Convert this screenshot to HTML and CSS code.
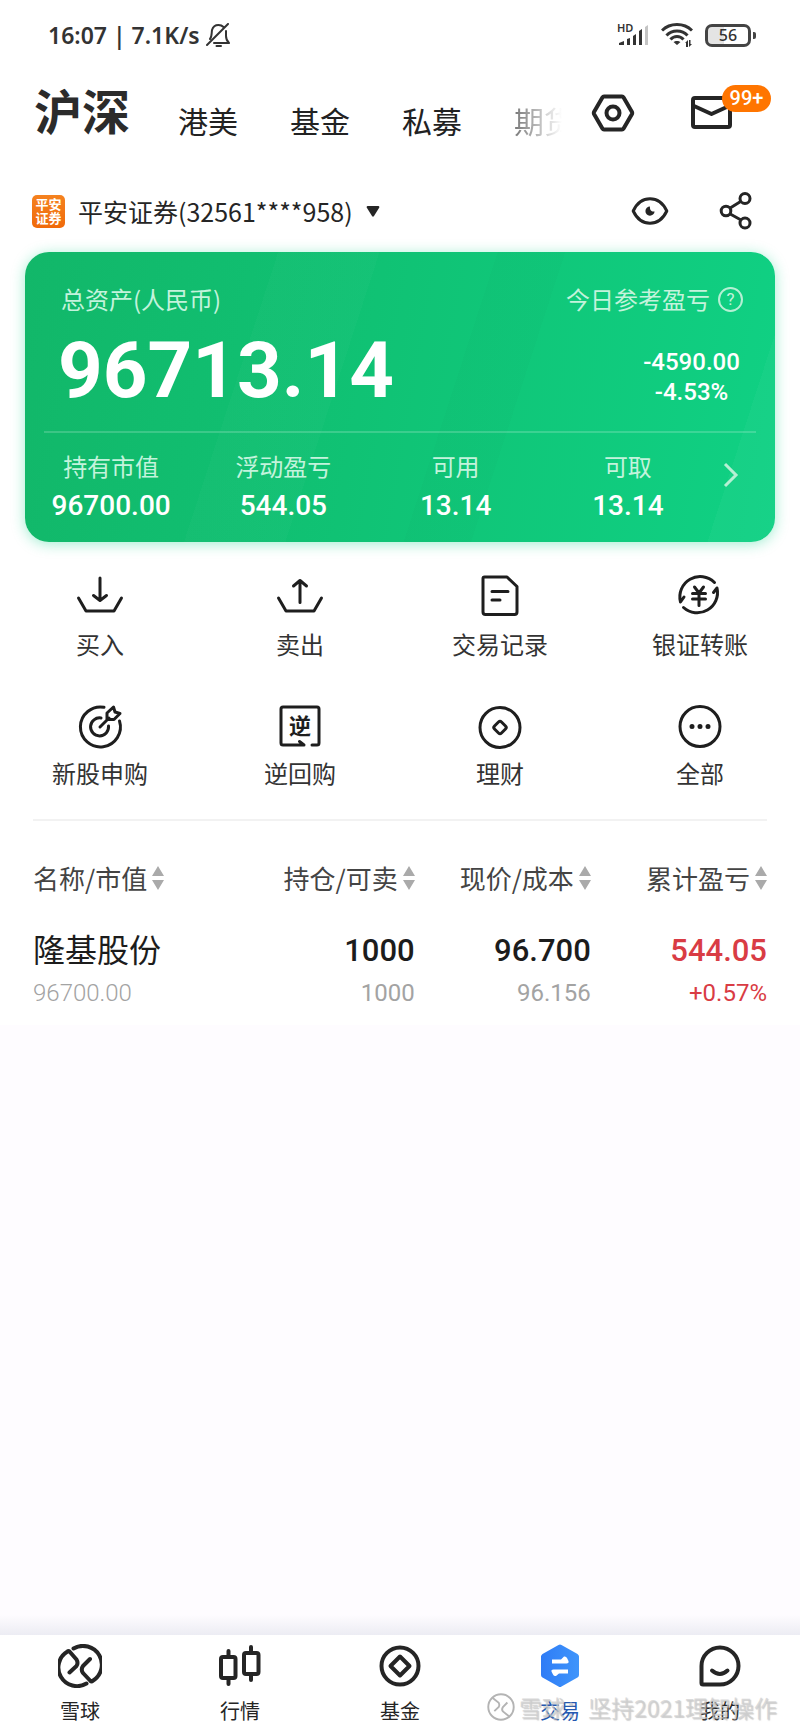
FILE: index.html
```html
<!DOCTYPE html>
<html lang="zh-CN">
<head>
<meta charset="utf-8">
<meta name="viewport" content="width=device-width, initial-scale=1">
<title>交易</title>
<link rel="stylesheet" href="styles.css">
</head>
<body>
<div class="app">
  <div class="status">
    <div class="status-left">
      <span>16:07 | 7.1K/s</span>
      <svg width="24" height="24" viewBox="0 0 24 24" fill="none" stroke="#333" stroke-width="2" stroke-linecap="round" stroke-linejoin="round"><path d="M4 16C6 14 5.500 10 6 7C7 3.500 9.500 2 12.500 2C14.500 2 16 2.500 17.500 4M20 8V13C20 16 21 18 23 20H8M1 22L22 1M10.500 23H15"/></svg>
    </div>
    <div class="status-right">
      <svg width="32" height="28" viewBox="0 0 32 28" fill="#333"><path d="M2 24V22L7 20V24ZM10 24V18L13 17V24ZM16 24V15L19 13V24ZM22 24V10L25 8V24Z"/><path fill="#c4c4c4" d="M28 24V6L31 4V24Z"/><text class="hd" x="0" y="11">HD</text></svg>
      <svg width="32" height="26" viewBox="0 0 32 26" fill="none" stroke="#333" stroke-width="3"><path d="M1 8.500C9 .500 23 .500 31 8.500M5.500 13.500C11 7.500 21 7.500 26.500 13.500M9.500 17.500C13 13.500 19 13.500 22.500 17.500"/><path fill="#333" stroke="none" d="M16 23L12.500 20C14 18.500 18 18.500 19.500 20ZM24 21L27 18V25H25V21ZM28 18H29.500V22H31L28 25Z"/></svg>
      <span class="battery">56</span>
    </div>
  </div>

  <header class="topbar">
    <nav class="tabs">
      <a class="tab tab-active" href="#">沪深</a>
      <a class="tab" href="#">港美</a>
      <a class="tab" href="#">基金</a>
      <a class="tab" href="#">私募</a>
      <a class="tab tab-fade" href="#">期货</a>
    </nav>
    <button class="icon-btn" aria-label="设置"><svg width="44" height="40" viewBox="0 0 44 40" fill="none" stroke="#252525" stroke-width="4" stroke-linejoin="round"><path d="M13 3.500H31Q32 3.500 32.600 4.500L41 19Q41.500 20 41 21L32.600 35.500Q32 36.500 31 36.500H13Q12 36.500 11.400 35.500L3 21Q2.500 20 3 19L11.400 4.500Q12 3.500 13 3.500Z"/><circle cx="22" cy="20" r="6.500"/></svg></button>
    <button class="icon-btn mail" aria-label="消息"><svg width="42" height="34" viewBox="0 0 42 34" fill="none" stroke="#252525" stroke-width="4" stroke-linejoin="round"><rect x="2" y="2" width="37" height="29" rx="2"/><path d="M3 10L20.500 18L38 10"/></svg><span class="badge">99+</span></button>
  </header>

  <div class="account">
    <button class="account-pick">
      <span class="broker"><span>平安</span><span>证券</span></span>
      <span>平安证券(32561****958)</span>
      <svg width="14" height="11" viewBox="0 0 14 11"><path fill="#252525" d="M1.500 0H12.500Q14 .500 13 2L8 10Q7 11.500 6 10L1 2Q0 .500 1.500 0Z"/></svg>
    </button>
    <button class="icon-btn" aria-label="隐藏金额"><svg width="38" height="28" viewBox="0 0 38 28" fill="none" stroke="#252525" stroke-width="3" stroke-linejoin="round"><path d="M2.200 14C6 6 12 1.800 19 1.800S32 6 35.800 14C32 22 26 26.200 19 26.200S6 22 2.200 14Z"/><path fill="#252525" stroke="none" d="M19 9.500A4.600 4.600 0 1 0 23.600 14.500C20.500 15 18.500 13 19 9.500Z"/></svg></button>
    <button class="icon-btn" aria-label="分享"><svg width="34" height="40" viewBox="0 0 34 40" fill="none" stroke="#252525" stroke-width="3"><circle cx="7" cy="20" r="4.800"/><circle cx="26" cy="7.500" r="5"/><circle cx="26" cy="32" r="5"/><path d="M10.800 17.200L22 10.300M10.800 22.800L22 29"/></svg></button>
  </div>

  <section class="card">
    <div class="card-top">
      <div class="total">
        <div class="label">总资产(人民币)</div>
        <div class="amount">96713.14</div>
      </div>
      <div class="today">
        <div class="label today-label">今日参考盈亏<button class="help" aria-label="说明">?</button></div>
        <div class="today-values"><div>-4590.00</div><div>-4.53%</div></div>
      </div>
    </div>
    <div class="card-bottom">
      <div class="stat"><span class="label">持有市值</span><b>96700.00</b></div>
      <div class="stat"><span class="label">浮动盈亏</span><b>544.05</b></div>
      <div class="stat"><span class="label">可用</span><b>13.14</b></div>
      <div class="stat"><span class="label">可取</span><b>13.14</b></div>
      <svg class="chevron" width="16" height="26" viewBox="0 0 16 26" fill="none" stroke="#b5f0d4" stroke-width="3"><path d="M2 2L13 13L2 24"/></svg>
    </div>
  </section>

  <nav class="actions">
    <a class="action" href="#"><svg width="48" height="48" viewBox="0 0 48 48"><path d="M2.500 24L10 37H38L45.500 24M24 4V26M17.500 21.500L24 26.500L30.500 21.500"/></svg>买入</a>
    <a class="action" href="#"><svg width="48" height="48" viewBox="0 0 48 48"><path d="M2.500 24L10 37H38L45.500 24M24 28.500V6.500M17.500 12L24 6.500L30.500 12"/></svg>卖出</a>
    <a class="action" href="#"><svg width="48" height="48" viewBox="0 0 48 48"><path d="M8.500 3H31L41 12.500V38Q41 40.500 38.500 40.500H9.500Q7 40.500 7 38V4.500Q7 3 8.500 3ZM16 17.500H32M16 26H24"/></svg>交易记录</a>
    <a class="action" href="#"><svg width="48" height="48" viewBox="0 0 48 48"><path d="M38.500 8.500A20.300 20.300 0 0 0 4.500 28L8 23M7.500 33.500A20.300 20.300 0 0 0 41 14L37.500 18.500M18.500 13L23 19L27.500 13M16.500 19.500H29.500M16.500 25H29.500M23 19V31.500"/></svg>银证转账</a>
    <a class="action" href="#"><svg width="48" height="48" viewBox="0 0 48 48"><path d="M28 4.300A20 20 0 1 0 43.500 18M25 15A9 9 0 1 0 32.500 23M24 24L33 15M31 16.500V10L37.500 4L39 9L44 10.500L38 16.500Z"/></svg>新股申购</a>
    <a class="action" href="#"><svg width="48" height="48" viewBox="0 0 48 48"><path d="M28 42H7Q5 42 5 40V6Q5 4 7 4H41Q43 4 43 6V40Q43 42 41 42H36M28 42L23.500 38.500"/><text class="ni" x="24" y="31">逆</text></svg>逆回购</a>
    <a class="action" href="#"><svg width="48" height="48" viewBox="0 0 48 48"><circle cx="24" cy="24.500" r="20"/><path d="M22.500 19Q24 17.500 25.500 19L29.500 23Q31 24.500 29.500 26L25.500 30Q24 31.500 22.500 30L18.500 26Q17 24.500 18.500 23Z"/></svg>理财</a>
    <a class="action" href="#"><svg width="48" height="48" viewBox="0 0 48 48"><circle cx="24" cy="23.500" r="20"/><path class="dots" d="M16 23.500H16.010M24 23.500H24.010M32 23.500H32.010"/></svg>全部</a>
  </nav>

  <table class="holdings">
    <thead>
      <tr>
        <th><button class="sort">名称/市值<svg width="12" height="24" viewBox="0 0 12 24"><path d="M6 0L12 10H0ZM6 24L0 14H12Z"/></svg></button></th>
        <th><button class="sort">持仓/可卖<svg width="12" height="24" viewBox="0 0 12 24"><path d="M6 0L12 10H0ZM6 24L0 14H12Z"/></svg></button></th>
        <th><button class="sort">现价/成本<svg width="12" height="24" viewBox="0 0 12 24"><path d="M6 0L12 10H0ZM6 24L0 14H12Z"/></svg></button></th>
        <th><button class="sort">累计盈亏<svg width="12" height="24" viewBox="0 0 12 24"><path d="M6 0L12 10H0ZM6 24L0 14H12Z"/></svg></button></th>
      </tr>
    </thead>
    <tbody>
      <tr>
        <td><div class="main">隆基股份</div><div class="sub">96700.00</div></td>
        <td><div class="main">1000</div><div class="sub">1000</div></td>
        <td><div class="main">96.700</div><div class="sub">96.156</div></td>
        <td class="gain"><div class="main">544.05</div><div class="sub">+0.57%</div></td>
      </tr>
    </tbody>
  </table>

  <div class="blank"></div>

  <nav class="bottom">
    <a class="nav-item" href="#"><svg width="44" height="44" viewBox="0 0 44 44"><path d="M15.500 4.500A18.500 18.500 0 0 1 34.500 37Q33.500 38 32.500 37L25 29Q22.500 25.500 25 22L32 15M28.500 39.500A18.500 18.500 0 0 1 9.500 7.500Q10.500 6.500 11.500 7.500L18.500 15.500Q20.500 19 18.500 22L11.500 28.500"/></svg>雪球</a>
    <a class="nav-item" href="#"><svg width="44" height="44" viewBox="0 0 44 44"><rect x="3" y="13" width="14.500" height="21" rx="2"/><rect x="26" y="9" width="14.500" height="21" rx="2"/><path d="M10.500 7V13M10.500 34V40M33 3V9M33 30V36"/></svg>行情</a>
    <a class="nav-item" href="#"><svg width="44" height="44" viewBox="0 0 44 44"><circle cx="22" cy="22" r="18.500"/><path d="M22 12.500L31.500 22L22 31.500L12.500 22Z"/></svg>基金</a>
    <a class="nav-item nav-current" href="#"><svg width="44" height="44" viewBox="0 0 44 44"><defs><linearGradient id="hex" x2="1" y2="0"><stop stop-color="#2f7cf6"/><stop offset="1" stop-color="#3f95fb"/></linearGradient></defs><path class="hex" d="M20.500 1Q22 0 23.500 1L39.500 10Q41 11 41 12.500V31Q41 32.500 39.500 33.500L23.500 42.500Q22 43.500 20.500 42.500L4.500 33.500Q3 32.500 3 31V12.500Q3 11 4.500 10Z"/><path class="swap" d="M14 15.500H23L26 12.500Q28 12 29 14L30.500 17Q31 19.500 28.500 19.500H14ZM30 29.500H21L18 32Q16 32.500 15 30.500L13.500 27.500Q13 25.500 15.500 25.500H30Z"/></svg>交易</a>
    <a class="nav-item" href="#"><svg width="44" height="44" viewBox="0 0 44 44"><path d="M3.500 22A18.500 18.500 0 1 1 22 40.500H5Q3.500 40.500 3.500 39ZM14 26.500Q22 33.500 29.500 26.500"/></svg>我的</a>
    <div class="mark"><svg width="28" height="28" viewBox="0 0 44 44"><circle cx="22" cy="22" r="20"/><path d="M9 8L18.500 15.500Q20.500 19 18.500 22L11.500 28.500M35 37L25 29Q22.500 25.500 25 22L32 15"/></svg><span>雪球：坚持2021理智操作</span></div>
  </nav>
</div>
</body>
</html>
```

FILE: styles.css
```css
* { box-sizing: border-box; }
body {
  margin: 0;
  background: #fff;
  color: #252525;
  font-family: "Noto Sans CJK SC", sans-serif;
}
a { color: inherit; text-decoration: none; }
button {
  margin: 0;
  padding: 0;
  border: 0;
  background: none;
  color: inherit;
  font: inherit;
}
svg { display: block; flex: none; }
.app { min-height: 100vh; display: flex; flex-direction: column; }

.status {
  height: 70px;
  padding: 0 44px 0 48px;
  display: flex;
  align-items: center;
  justify-content: space-between;
  color: #333;
}
.status-left {
  display: flex;
  align-items: center;
  gap: 6px;
  font: 600 23px/32px "Noto Sans", sans-serif;
}
.status-right { display: flex; align-items: center; gap: 12px; }
.hd { font: 600 11px "Noto Sans", sans-serif; }
.battery {
  position: relative;
  width: 46px;
  height: 23px;
  margin-right: 5px;
  border: 3px solid #444;
  border-radius: 7px;
  background: linear-gradient(90deg, #e4e4e4 40%, #fff 40%);
  font: 500 16px/17px "Noto Sans", sans-serif;
  text-align: center;
}
.battery::after {
  content: "";
  position: absolute;
  right: -8px;
  top: 5px;
  width: 3px;
  height: 7px;
  border-radius: 0 2px 2px 0;
  background: #444;
}

.topbar {
  height: 96px;
  padding: 0 67px 10px 34px;
  display: flex;
  align-items: center;
}
.tabs {
  flex: 1;
  margin-bottom: 8px;
  display: flex;
  align-items: flex-end;
  gap: 52px;
  white-space: nowrap;
  font-size: 30px;
  line-height: 44px;
}
.tab { color: #222; }
.tab-active {
  margin-right: -4px;
  font-size: 48px;
  font-weight: 700;
  line-height: 66px;
  color: #2b2b2b;
}
.tab-fade {
  width: 48px;
  overflow: hidden;
  background: linear-gradient(90deg, #777, #fff);
  background-clip: text;
  color: transparent;
}
.icon-btn { display: flex; }
.topbar .icon-btn { margin-left: 28px; }
.topbar .mail { position: relative; margin-left: 56px; }
.badge {
  position: absolute;
  left: 31px;
  top: -11px;
  width: 49px;
  height: 27px;
  border-radius: 14px;
  background: #ff7500;
  color: #fff;
  font: 500 20px/27px Roboto, sans-serif;
  text-align: center;
}

.account {
  height: 86px;
  padding: 4px 47px 0 32px;
  display: flex;
  align-items: center;
  gap: 50px;
}
.account-pick {
  margin-right: auto;
  display: flex;
  align-items: center;
  gap: 13px;
  font-size: 25px;
  line-height: 36px;
}
.broker {
  width: 33px;
  height: 33px;
  display: flex;
  flex-direction: column;
  align-items: center;
  justify-content: center;
  border-radius: 5px;
  background: linear-gradient(#f5821f, #f06a0a);
  color: #fff;
  font-size: 13px;
  font-weight: 700;
  line-height: 14px;
}

.card {
  margin: 0 25px;
  border-radius: 24px;
  background:
    linear-gradient(108deg, transparent 30%, rgba(255, 255, 255, .02) 30% 42%, transparent 42% 56%, rgba(0, 60, 40, .02) 56% 64%, transparent 64% 92%, rgba(255, 255, 255, .03) 92%),
    linear-gradient(100deg, #12b769, #10c274 45%, #10d184);
  box-shadow: 0 2px 14px rgba(20, 210, 140, .4);
  color: #fff;
}
.card-top {
  height: 181px;
  margin: 0 19px;
  padding: 29px 13px 0 17px;
  display: flex;
  justify-content: space-between;
  border-bottom: 2px solid rgba(255, 255, 255, .18);
}
.label { font-size: 24px; line-height: 36px; color: #c3f3dc; }
.amount { margin: 12px 0 0 -3px; font: 700 78px/84px Roboto, sans-serif; }
.today-label { display: flex; align-items: center; gap: 8px; }
.help {
  width: 25px;
  height: 25px;
  border: 2px solid #b5f0d4;
  border-radius: 50%;
  font: 400 17px/21px Roboto, sans-serif;
}
.today-values {
  margin-top: 30px;
  padding-left: 74px;
  font: 500 24px/30px Roboto, sans-serif;
  text-align: center;
}
.card-bottom {
  height: 109px;
  padding-right: 36px;
  display: flex;
}
.stat {
  flex: 1;
  padding-top: 15px;
  display: flex;
  flex-direction: column;
  align-items: center;
  gap: 4px;
}
.stat b { font: 500 28px/36px Roboto, sans-serif; }
.chevron { margin: 29px 0 0 9px; }

.actions {
  margin-top: 32px;
  display: grid;
  grid-template-columns: repeat(4, 1fr);
  row-gap: 45px;
}
.action {
  display: flex;
  flex-direction: column;
  align-items: center;
  gap: 8px;
  font-size: 24px;
  line-height: 28px;
  color: #333;
}
.action svg {
  fill: none;
  stroke: #1e1e1e;
  stroke-width: 3;
  stroke-linecap: round;
  stroke-linejoin: round;
}
.action .dots { stroke-width: 5; }
.action .ni {
  font-size: 22px;
  font-weight: 700;
  text-anchor: middle;
  fill: #1e1e1e;
  stroke: none;
}

.holdings {
  margin: 32px 33px 0;
  border-top: 2px solid #f2f2f2;
  border-collapse: collapse;
  table-layout: fixed;
}
.holdings th { width: 24%; padding: 37px 0 0; font-weight: 400; text-align: right; }
.holdings th:nth-child(1) { width: 27%; }
.holdings th:nth-child(2) { width: 25%; }
.holdings th:first-child, .holdings td:first-child { text-align: left; }
.sort {
  display: inline-flex;
  align-items: center;
  gap: 5px;
  font-size: 26px;
  line-height: 40px;
  color: #444;
  white-space: nowrap;
}
.sort svg { fill: #aaa; }
.holdings td {
  padding: 29px 0 0;
  text-align: right;
  font-family: Roboto, "Noto Sans CJK SC", sans-serif;
}
.main { font-size: 31px; font-weight: 500; line-height: 48px; color: #1c1c1c; }
td:first-child .main { font-size: 32px; font-weight: 400; }
.sub { font-size: 24px; line-height: 36px; color: #a3a3a3; }
td:first-child .sub { font-weight: 300; }
.gain .main, .gain .sub { color: #d93c44; }

.blank {
  flex: 1;
  min-height: 40px;
  margin-top: 14px;
  background: linear-gradient(#fefcff calc(100% - 20px), #ececf3);
}
.bottom {
  position: relative;
  height: 98px;
  padding-top: 9px;
  display: grid;
  grid-template-columns: repeat(5, 1fr);
  background: #fff;
}
.nav-item {
  display: flex;
  flex-direction: column;
  align-items: center;
  gap: 9px;
  font-size: 20px;
  line-height: 28px;
}
.nav-item svg {
  fill: none;
  stroke: #252525;
  stroke-width: 4;
  stroke-linecap: round;
  stroke-linejoin: round;
}
.nav-current { color: #2558b0; }
.nav-item .hex { fill: url(#hex); stroke: none; }
.nav-item .swap { fill: #fff; stroke: none; }
.mark {
  position: absolute;
  right: 23px;
  bottom: 10px;
  display: flex;
  align-items: center;
  gap: 4px;
  font-size: 23px;
  line-height: 32px;
  color: rgba(205, 205, 205, .7);
  text-shadow: 1px 1px 1px rgba(130, 130, 130, .4);
  white-space: nowrap;
}
.mark svg { fill: none; stroke: #b4b4b4; stroke-width: 3; }
```
